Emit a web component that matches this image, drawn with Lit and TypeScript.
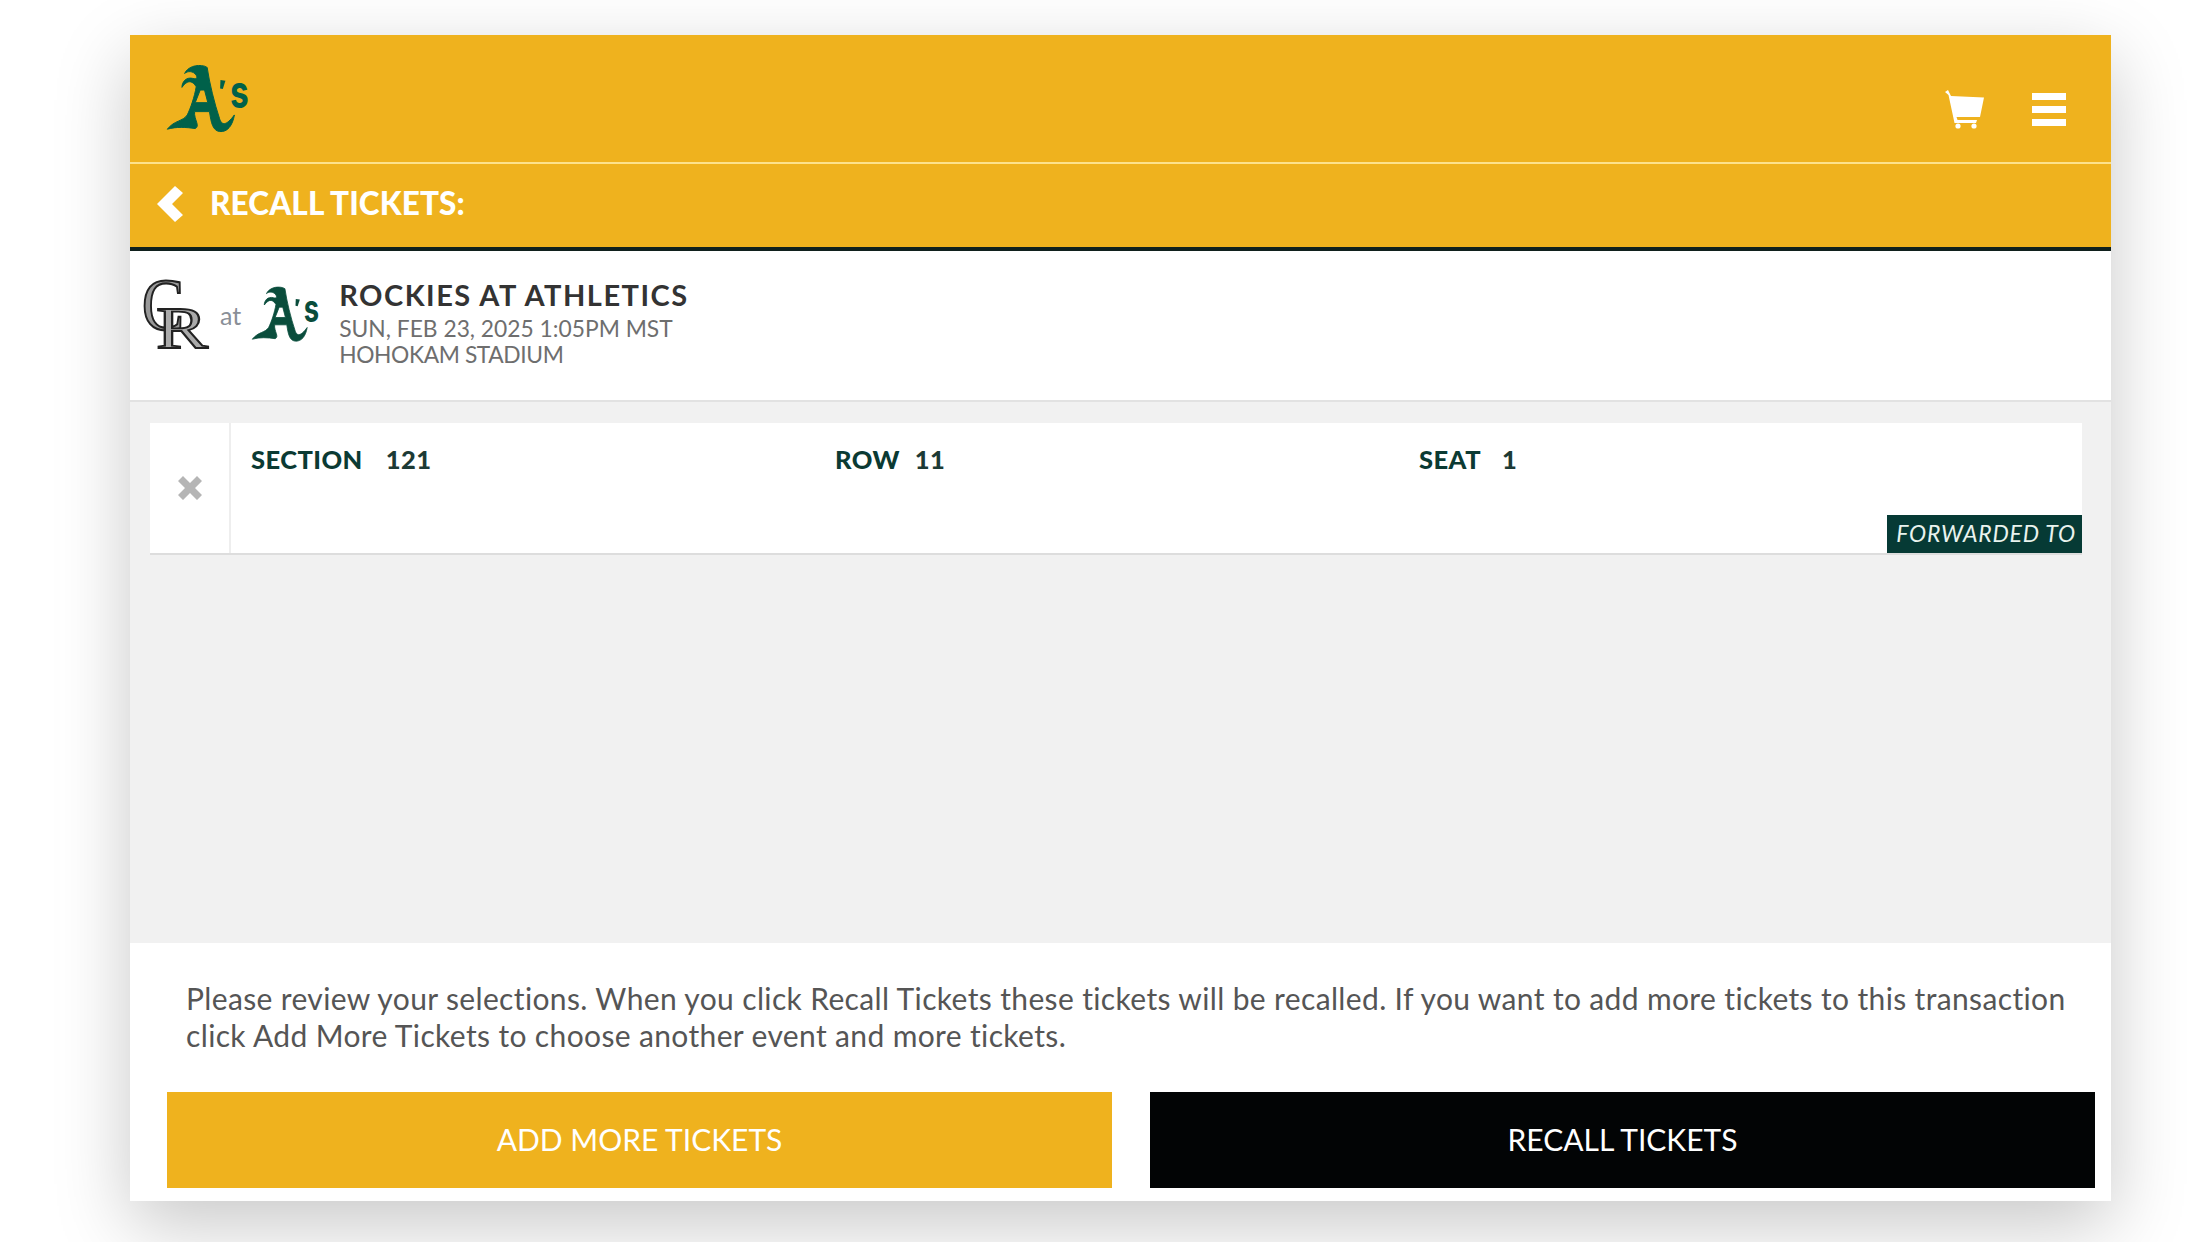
import { LitElement, html, css } from "lit";
import { customElement } from "lit/decorators.js";

const asPath = "M100 100C110 80 135 72 160 78L168 82C175 130 190 190 205 235C212 258 225 258 250 225C245 255 230 278 205 275C185 272 180 250 175 215L130 215C128 240 148 258 132 266C105 262 75 260 48 268C70 240 95 245 108 225C118 205 130 170 135 140C125 125 112 115 92 142C92 125 105 110 125 115C135 118 140 115 135 105C125 92 110 92 100 100ZM147 150L132 188L170 188L160 150Z";

const asLogo = (cls: string) => html`<svg class=${cls} viewBox="44 72 256 210" aria-label="A's">
  <path d=${asPath} fill="currentColor" fill-rule="evenodd" stroke="currentColor" stroke-width="3"></path>
  <path d="M208 120l15 2-8 25-8-2z" fill="currentColor"></path>
  <text transform="translate(237 204) scale(.72 1)" font-family="Inter, sans-serif" font-weight="700" font-size="140" fill="currentColor">s</text>
</svg>`;

@customElement("app-root")
export class AppRoot extends LitElement {
  static styles = css`
    :host { display: block; width: 2208px; height: 1242px; background: #fff; overflow: hidden; font-family: Lato, "Open Sans", sans-serif; }
    .page { padding: 35px 0 0 130px; }
    .card { width: 1981px; height: 1166px; display: flex; flex-direction: column; background: #f1f1f1; box-shadow: 0 24px 70px rgba(0,0,0,.22); }
    .top { height: 127px; flex: none; background: #efb21e; border-bottom: 2px solid #fde28c; display: flex; justify-content: space-between; }
    .logo-main { width: 85px; height: 70px; margin: 29px 0 0 36px; color: #00614a; overflow: visible; }
    .tools { display: flex; gap: 48px; padding: 55px 45px 0 0; }
    .cart { width: 39px; height: 39px; }
    .menu { width: 34px; display: flex; flex-direction: column; gap: 6px; padding-top: 3px; }
    .menu i { display: block; height: 7px; background: #fff; }
    .bar { height: 79px; padding-bottom: 4px; flex: none; background: #efb21e; border-bottom: 4px solid #10201d; display: flex; align-items: center; gap: 27px; padding-left: 27px; color: #fff; font-size: 31.5px; font-weight: 900; letter-spacing: .1px; }
    .bar span { position: relative; top: -1px; }
    .chev { width: 26px; height: 36px; }
    .event { height: 149px; flex: none; background: #fff; border-bottom: 2px solid #e2e2e2; display: flex; padding-left: 10px; align-items: flex-start; }
    .cr { width: 70px; height: 69px; margin-top: 29px; overflow: visible; }
    .at { font-size: 25px; color: #8a8f98; margin: 49px 10px 0 10px; line-height: 30px; }
    .logo-small { width: 70px; height: 57px; margin-top: 35px; color: #0a4d3c; overflow: visible; }
    .meta { margin: 26px 0 0 18px; color: #6e6e6e; font-size: 22.8px; line-height: 27px; }
    .meta h1 { margin: 0 0 2px; font-size: 29px; line-height: 36px; font-weight: 700; color: #333; letter-spacing: 1.5px; }
    .venue { letter-spacing: -.4px; margin-top: -1px; }
    .list { flex: 1; padding: 21px 29px 0 20px; }
    .row { height: 130px; background: #fff; border-bottom: 2px solid #ddd; display: flex; position: relative; }
    .x { width: 79px; flex: none; border-right: 2px solid #eee; display: flex; align-items: center; justify-content: center; }
    .x svg { width: 28px; height: 28px; }
    .cols { display: grid; grid-template-columns: repeat(3, 584px); grid-auto-rows: 32px; padding: 20px 0 0 20px; font-size: 25.5px; line-height: 32px; font-weight: 900; color: #0b3a33; letter-spacing: .45px; }
    .cols b { font-weight: 900; margin-left: 21px; color: #1d3a35; }
    .cols div:nth-child(1) b { margin-left: 23px; }
    .cols div:nth-child(2) b { margin-left: 15px; }
    .badge { position: absolute; right: 0; bottom: 0; width: 195px; height: 38px; box-sizing: border-box; background: #063a35; color: #e9f3ee; font-style: italic; font-size: 23px; letter-spacing: .8px; line-height: 36px; text-align: right; padding-right: 6px; white-space: nowrap; }
    .foot { height: 258px; flex: none; background: #fff; box-sizing: border-box; padding: 37px 16px 0 37px; display: flex; flex-direction: column; }
    .foot p { margin: 0 0 0 19px; font-size: 30px; line-height: 36.5px; color: #555; white-space: nowrap; letter-spacing: .36px; }
    .btns { display: flex; gap: 38px; margin-top: 39px; }
    .btn { width: 945px; height: 94px; padding-bottom: 2px; flex: none; display: flex; align-items: center; justify-content: center; font-size: 30px; color: #fff; }
    .gold { background: #efb21e; }
    .black { background: #020405; }
    .cr text { font-family: "Liberation Serif", serif; }
  `;

  render() {
    return html`<div class="page"><div class="card">
      <div class="top">
        ${asLogo("logo-main")}
        <div class="tools">
          <svg class="cart" viewBox="0 0 39 39"><path d="M0 2L3 0L6 6L39 7.5L35 27L11.5 27L12.5 30L32 30L31 33L9.5 33L3.5 5Z" fill="#fff"></path><circle cx="13" cy="36" r="2.6" fill="#fff"></circle><circle cx="29" cy="36" r="2.6" fill="#fff"></circle></svg>
          <div class="menu"><i></i><i></i><i></i></div>
        </div>
      </div>
      <div class="bar">
        <svg class="chev" viewBox="0 0 26 36"><path d="M18 0l8 7-11 11 11 11-8 7L0 18z" fill="#fff"></path></svg>
        <span>RECALL TICKETS:</span>
      </div>
      <div class="event">
        <svg class="cr" viewBox="0 0 70 69">
          <text transform="translate(2 50) scale(.85 1)" font-size="74" fill="#999" stroke="#222" stroke-width="2.2">C</text>
          <text transform="translate(16 68) scale(1.3 1)" font-size="60" fill="#aaa" stroke="#222" stroke-width="1.8">R</text>
        </svg>
        <span class="at">at</span>
        ${asLogo("logo-small")}
        <div class="meta">
          <h1>ROCKIES AT ATHLETICS</h1>
          <div>SUN, FEB 23, 2025 1:05PM MST</div>
          <div class="venue">HOHOKAM STADIUM</div>
        </div>
      </div>
      <div class="list">
        <div class="row">
          <div class="x"><svg viewBox="0 0 28 28"><path d="M2 7l5-5 7 7 7-7 5 5-7 7 7 7-5 5-7-7-7 7-5-5 7-7z" fill="#b5b5b5"></path></svg></div>
          <div class="cols">
            <div>SECTION<b>121</b></div>
            <div>ROW<b>11</b></div>
            <div>SEAT<b>1</b></div>
          </div>
          <div class="badge">FORWARDED TO</div>
        </div>
      </div>
      <div class="foot">
        <p>Please review your selections. When you click Recall Tickets these tickets will be recalled. If you want to add more tickets to this transaction<br>click Add More Tickets to choose another event and more tickets.</p>
        <div class="btns">
          <div class="btn gold">ADD MORE TICKETS</div>
          <div class="btn black">RECALL TICKETS</div>
        </div>
      </div>
    </div></div>`;
  }
}
